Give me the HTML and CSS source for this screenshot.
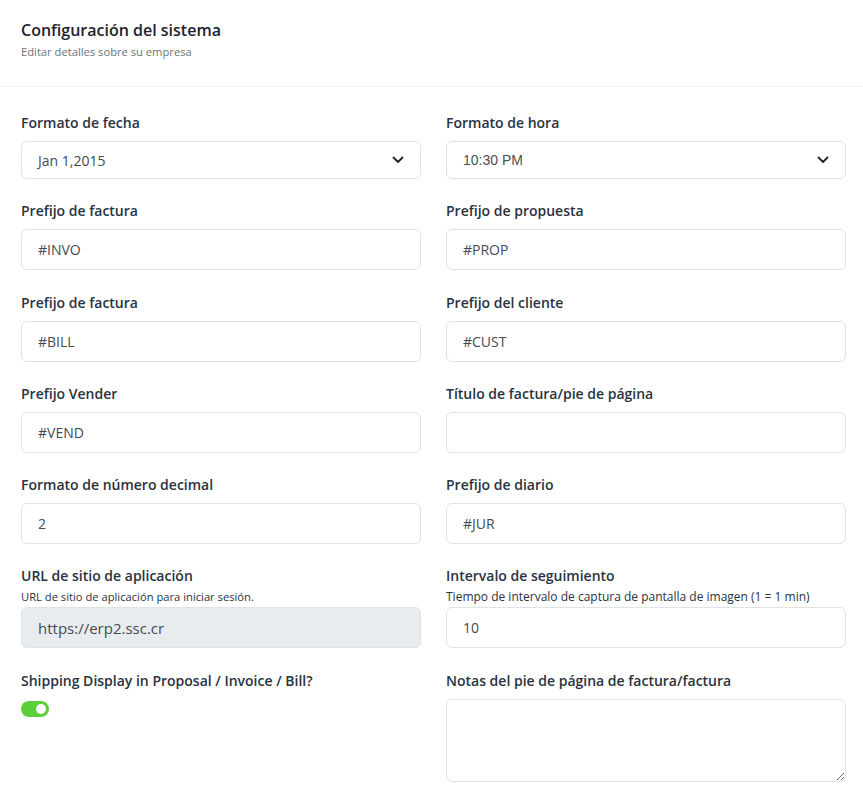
FILE: index.html
```html
<!DOCTYPE html>
<html lang="es">
<head>
<meta charset="utf-8">
<title>Configuración del sistema</title>
<link rel="stylesheet" href="styles.css">
</head>
<body>
<div class="card">
  <div class="card-header">
    <h5 class="title">Configuración del sistema</h5>
    <div class="subtitle">Editar detalles sobre su empresa</div>
  </div>
  <div class="card-body">
    <div class="field">
      <label class="label">Formato de fecha</label>
      <div class="select">
        <span>Jan 1,2015</span>
        <svg class="chev" width="12" height="8" viewBox="0 0 12 8"><path d="M1.5 1.5 L6 6 L10.5 1.5" fill="none" stroke="#222" stroke-width="1.8" stroke-linecap="round" stroke-linejoin="round"/></svg>
      </div>
    </div>
    <div class="field">
      <label class="label">Formato de hora</label>
      <div class="select alt">
        <span>10:30 PM</span>
        <svg class="chev" width="12" height="8" viewBox="0 0 12 8"><path d="M1.5 1.5 L6 6 L10.5 1.5" fill="none" stroke="#222" stroke-width="1.8" stroke-linecap="round" stroke-linejoin="round"/></svg>
      </div>
    </div>

    <div class="field">
      <label class="label">Prefijo de factura</label>
      <div class="input">#INVO</div>
    </div>
    <div class="field">
      <label class="label">Prefijo de propuesta</label>
      <div class="input">#PROP</div>
    </div>

    <div class="field">
      <label class="label">Prefijo de factura</label>
      <div class="input">#BILL</div>
    </div>
    <div class="field">
      <label class="label">Prefijo del cliente</label>
      <div class="input">#CUST</div>
    </div>

    <div class="field">
      <label class="label">Prefijo Vender</label>
      <div class="input">#VEND</div>
    </div>
    <div class="field">
      <label class="label">Título de factura/pie de página</label>
      <div class="input"></div>
    </div>

    <div class="field">
      <label class="label">Formato de número decimal</label>
      <div class="input">2</div>
    </div>
    <div class="field">
      <label class="label">Prefijo de diario</label>
      <div class="input">#JUR</div>
    </div>

    <div class="field">
      <label class="label tight">URL de sitio de aplicación</label>
      <div class="help">URL de sitio de aplicación para iniciar sesión.</div>
      <div class="input disabled">https://erp2.ssc.cr</div>
    </div>
    <div class="field">
      <label class="label tight">Intervalo de seguimiento</label>
      <div class="help wide">Tiempo de intervalo de captura de pantalla de imagen (1 = 1 min)</div>
      <div class="input">10</div>
    </div>

    <div class="field">
      <label class="label">Shipping Display in Proposal / Invoice / Bill?</label>
      <div class="switch"><span class="knob"></span></div>
    </div>
    <div class="field">
      <label class="label">Notas del pie de página de factura/factura</label>
      <textarea class="textarea"></textarea>
    </div>
  </div>
</div>
</body>
</html>
```

FILE: styles.css
```css
* { box-sizing: border-box; }
html, body { margin: 0; padding: 0; background: #ffffff; }
body {
  font-family: "Open Sans", "Noto Sans", sans-serif;
  color: #293240;
  width: 863px;
  height: 797px;
  overflow: hidden;
}
.card { background: #fff; }
.card-header {
  padding: 18px 21px 26px 21px;
  border-bottom: 1px solid #f1f1f3;
}
.title {
  margin: 0;
  font-size: 16px;
  line-height: 24px;
  font-weight: 600;
  color: #1c232f;
}
.subtitle {
  margin-top: 2px;
  font-size: 11.2px;
  line-height: 16px;
  color: #6b727c;
}
.card-body {
  display: grid;
  grid-template-columns: 400px 400px;
  column-gap: 25px;
  row-gap: 21.3px;
  padding: 25px 17px 0 21px;
}
.field { display: flex; flex-direction: column; }
.label {
  font-size: 14px;
  line-height: 21px;
  font-weight: 600;
  color: #293240;
  margin-bottom: 8px;
}
.label.tight { margin-bottom: 3px; }
.help {
  font-size: 11.2px;
  line-height: 16px;
  color: #293240;
  margin-bottom: 2px;
}
.help.wide { font-size: 12px; }
.input, .select {
  height: 41px;
  border: 1px solid #dfe2e6;
  border-radius: 6px;
  padding: 0 16px;
  font-size: 14px;
  color: #444a53;
  display: flex;
  align-items: center;
  background: #fff;
}
.select {
  height: 38px;
  justify-content: space-between;
}
.select.alt span { font-family: "Liberation Sans", Arial, sans-serif; color: #4b5058; }
.chev { display: block; }
.input.disabled {
  background: #e9ecef;
  font-size: 15px;
  color: #444a53;
}
.switch {
  margin-top: 2px;
  width: 28px;
  height: 16px;
  border-radius: 8px;
  background: #5ccf3a;
  position: relative;
}
.knob {
  position: absolute;
  right: 3px;
  top: 3px;
  width: 10px;
  height: 10px;
  border-radius: 50%;
  background: #fff;
}
.textarea {
  height: 83px;
  border: 1px solid #dfe2e6;
  border-radius: 6px;
  font-family: inherit;
  font-size: 14px;
  resize: vertical;
  padding: 8px 16px;
  width: 100%;
  margin: 0;
  display: block;
}
```
